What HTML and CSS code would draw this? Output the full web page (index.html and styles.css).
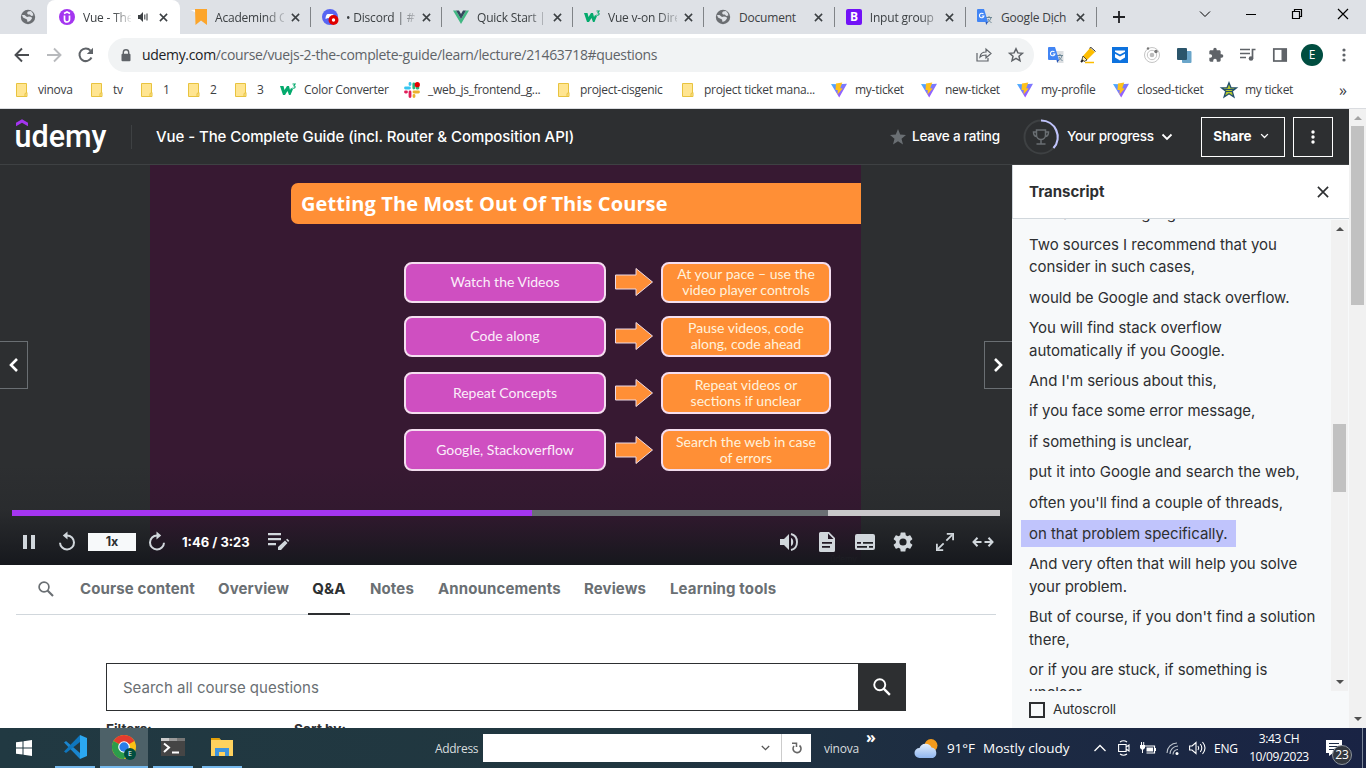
FILE: index.html
```html
<!DOCTYPE html>
<html lang="en">
<head>
<meta charset="utf-8">
<title>Vue - The Complete Guide</title>
<link rel="stylesheet" href="styles.css">
</head>
<body>
<svg class="defs" width="0" height="0">
  <defs>
    <linearGradient id="vg" x1="0" y1="0" x2="1" y2="1"><stop offset="0" stop-color="#41b6ff"/><stop offset="1" stop-color="#bd34fe"/></linearGradient>
    <linearGradient id="cg" x1="0" y1="0" x2="0" y2="1"><stop offset="0" stop-color="#e3eefc"/><stop offset="1" stop-color="#8fb6f0"/></linearGradient>
  </defs>
  <symbol id="globe" viewBox="0 0 16 16"><circle cx="8" cy="8" r="7.200" fill="#6b6e72"/><path d="M2 6l2.500 0 2.500 2 2-.5 2.500.5.500 1.500-2 2.500-2.500 1-.5-2.500L3 8.500zM8 2.500l3-.5 2 2.500.3 2-2 .5-1.500-1.500H8l-1-1.500z" fill="#dee1e6"/></symbol>
  <symbol id="x" viewBox="0 0 10 10"><path d="M1 1l8 8M9 1L1 9" stroke="currentColor" stroke-width="1.700" fill="none"/></symbol>
  <symbol id="w3" viewBox="0 0 16 16"><path d="M0 4h3.500l1 4L7 4h2l1 4 1-2 2 1-2.500 6H9L7.500 9 5 13H3z" fill="#04aa6d"/><path d="M12.500 2h2.600l-1.200 1.700c1.800.2 1.700 2.600-.3 2.600-.6 0-1-.2-1.200-.5" fill="none" stroke="#04aa6d" stroke-width="1.100"/></symbol>
  <symbol id="gt" viewBox="0 0 16 16"><path d="M7 4h8.500v12H10z" fill="#dcdfe2"/><path d="M9 8.500h6M12 7v1.500M14 8.500c-.5 2.500-2 4-3.500 5M11 10c1 2 2 3 3.500 3.500" stroke="#6d8796" stroke-width="1" fill="none"/><path d="M1 0h6l4 13H1a1 1 0 0 1-1-1V1a1 1 0 0 1 1-1z" fill="#4285f4"/><path d="M8.500 13h2.500l-1.800 3z" fill="#2857b8"/><path d="M6.500 5A2.300 2.300 0 1 0 7 7H4.800" fill="none" stroke="#fff" stroke-width="1.100"/></symbol>
  <symbol id="folder" viewBox="0 0 16 16"><path d="M2.500 1.500h10v13h-10z" fill="#ffe591" stroke="#e8c33f"/><path d="M11 14.500v-3l2-1v4z" fill="#ffe591" stroke="#e8c33f"/></symbol>
  <symbol id="vite" viewBox="0 0 16 16"><path d="M0 2l6 .2 10-.4L8.200 15.600z" fill="url(#vg)"/><path d="M11.300.4L5 1.400l-.5 6.600 2.300.1-.3 4.300 5.200-6-2.500-.2z" fill="#ffc21a"/></symbol>
  <symbol id="chev" viewBox="0 0 12 8"><path d="M1.500 1.500L6 6l4.500-4.500" fill="none" stroke="currentColor" stroke-width="1.800"/></symbol>
  <symbol id="lens" viewBox="0 0 16 16"><circle cx="6" cy="6" r="4.900" fill="none" stroke="currentColor" stroke-width="1.700"/><path d="M9.500 9.500l5.500 5.500" stroke="currentColor" stroke-width="2.100"/></symbol>
  <symbol id="arrow" viewBox="0 0 38 30"><path d="M.5 8h20.500V1.500L37.500 15 21 28.500V22H.5z" fill="#ff8f36" stroke="#ecd9e6" stroke-width="1"/></symbol>
  <symbol id="replay" viewBox="0 0 18 20"><path d="M9 4.500a7 7 0 1 1-7 7.200" fill="none" stroke="currentColor" stroke-width="2"/><path d="M9.500 .5v8L4.800 4.400z" fill="currentColor"/></symbol>
</svg>

<header class="browser">
  <div class="tabs">
    <div class="tab-pin"><svg class="i16"><use href="#globe"/></svg></div>
    <div class="tab active">
      <svg class="i16" viewBox="0 0 16 16"><circle cx="8" cy="8" r="8" fill="#a435f0"/><path d="M5 4.500L8 3l3 1.500M5.500 6.500v4a2.500 2.500 0 0 0 5 0v-4" fill="none" stroke="#fff" stroke-width="1.700"/></svg>
      <span class="t">Vue - The</span>
      <svg class="spk" viewBox="0 0 10 10"><path d="M0 3h2l3-3v10L2 7H0z" fill="#3c4043"/><path d="M6.800 2.500v5M9 1.500v7" stroke="#3c4043" stroke-width="1.100"/></svg>
      <svg class="x"><use href="#x"/></svg>
    </div>
    <div class="tab"><svg class="i16" viewBox="0 0 16 16"><path d="M0 1h5v3z" fill="#fff"/><path d="M4 0h12v16l-6-4.500L4.500 16z" fill="#fca52b"/></svg><span class="t">Academind C</span><svg class="x"><use href="#x"/></svg></div>
    <div class="tab"><svg class="i16" viewBox="0 0 16 16"><circle cx="8" cy="8" r="8" fill="#5865f2"/><path d="M3.500 10c0-3 1-5 2.500-5h4c1.500 0 2.500 2 2.500 4-2 1-5 .5-6.500 0z" fill="#fff"/><circle cx="11.500" cy="11" r="5" fill="#e00000"/><circle cx="11.500" cy="11" r="1.700" fill="#fff"/></svg><span class="t">• Discord | #v</span><svg class="x"><use href="#x"/></svg></div>
    <div class="tab"><svg class="i16" viewBox="0 0 16 16"><path d="M0 1.500h3L8 10l5-8.500h3L8 15z" fill="#41b883"/><path d="M3 1.500h3L8 5l2-3.500h3L8 10z" fill="#34495e"/></svg><span class="t">Quick Start |</span><svg class="x"><use href="#x"/></svg></div>
    <div class="tab"><svg class="i16"><use href="#w3"/></svg><span class="t">Vue v-on Dire</span><svg class="x"><use href="#x"/></svg></div>
    <div class="tab"><svg class="i16"><use href="#globe"/></svg><span class="t full">Document</span><svg class="x"><use href="#x"/></svg></div>
    <div class="tab"><span class="boot">B</span><span class="t">Input group</span><svg class="x"><use href="#x"/></svg></div>
    <div class="tab"><svg class="i16"><use href="#gt"/></svg><span class="t full">Google Dịch</span><svg class="x"><use href="#x"/></svg></div>
    <svg class="plus" viewBox="0 0 12 12"><path d="M6 0v12M0 6h12" stroke="#202124" stroke-width="1.800"/></svg>
    <div class="win">
      <svg width="12" height="8"><path d="M1 1.500l5 5 5-5" fill="none" stroke="#000" stroke-width="1"/></svg>
      <svg width="10" height="10"><path d="M0 5.500h10" stroke="#000"/></svg>
      <svg width="10" height="10"><path d="M.5 2.500h7v7h-7zM2.500 2.500v-2h7v7h-2" fill="none" stroke="#000" stroke-width="1.200"/></svg>
      <svg width="10" height="10"><path d="M0 0l10 10M10 0L0 10" stroke="#000" stroke-width="1.200"/></svg>
    </div>
  </div>
  <div class="toolbar">
    <svg class="nav" viewBox="0 0 16 16"><path d="M15 8H2M8 1.500L1.500 8 8 14.500" fill="none" stroke="#4a4d51" stroke-width="1.900"/></svg>
    <svg class="nav" viewBox="0 0 16 16"><path d="M1 8h13M8 1.500L14.500 8 8 14.500" fill="none" stroke="#b8babd" stroke-width="1.900"/></svg>
    <svg class="nav" viewBox="0 0 16 16"><path d="M13.500 10.500A6.300 6.300 0 1 1 12.500 3.600" fill="none" stroke="#5f6368" stroke-width="2"/><path d="M15 .8v6.200H8.800z" fill="#5f6368"/></svg>
    <div class="omni">
      <svg class="lock" viewBox="0 0 10 13"><path d="M2.300 5V3.500a2.700 2.700 0 0 1 5.400 0V5" fill="none" stroke="#5f6368" stroke-width="1.400"/><rect x=".5" y="4.700" width="9" height="7.600" rx="1" fill="#5f6368"/></svg>
      <span class="url"><b>udemy.com</b>/course/vuejs-2-the-complete-guide/learn/lecture/21463718#questions</span>
      <svg class="i16 share-i" viewBox="0 0 16 16"><path d="M1 6v8h11v-3M4 10c.5-4 3-5 6-5V2l5 4.500-5 4.500V8C7.500 8 5.500 8.500 4 10z" fill="none" stroke="#5f6368" stroke-width="1.200"/></svg>
      <svg class="i16" viewBox="0 0 16 16"><path d="M8 1.700l1.900 4.200 4.500.4-3.400 3 1 4.500-4-2.400-4 2.400 1-4.500-3.400-3 4.500-.4z" fill="none" stroke="#5f6368" stroke-width="1.500"/></svg>
    </div>
    <div class="ext">
      <svg class="i16"><use href="#gt"/></svg>
      <svg class="i16" viewBox="0 0 16 16"><path d="M3 9l7-8 5 4-8 8z" fill="#fdbd00"/><path d="M3 9l4 4-3 1.500-2-2z" stroke="#222" stroke-width=".8" fill="#fff0b0"/><path d="M9.500 1.200L11 .5l4.500 4" stroke="#222" fill="none"/><path d="M1 15l2-2" stroke="#222" stroke-width="2"/><path d="M5 15.500h9" stroke="#fdbd00" stroke-width="1.500"/></svg>
      <svg class="i16" viewBox="0 0 16 16"><path d="M0 0h16v16H0z" fill="#0d72de"/><path d="M3 3.500h10v7L8 13.500l-5-3z" fill="#fff"/><path d="M2.500 5.500L8 8.500l5.500-3" stroke="#0d72de" stroke-width="1.600" fill="none"/></svg>
      <svg class="i16" viewBox="0 0 16 16"><g fill="none" stroke="#c5c5c5"><circle cx="8" cy="8" r="7.500"/><circle cx="8" cy="8" r="4.700"/></g><circle cx="8" cy="8" r="2.300" fill="#bbb"/><circle cx="12" cy="4.500" r="1.700" fill="#777"/><circle cx="4" cy="1.500" r="1.200" fill="#777"/></svg>
      <svg class="i16" viewBox="0 0 16 16"><rect x="6" y="4" width="9.500" height="12" rx="1" fill="#6aa5c9"/><rect x="1" y="1" width="10" height="12" rx="1" fill="#2b556b"/></svg>
      <svg class="i16" viewBox="0 0 24 24"><path fill="#5f6368" d="M20.500 11H19V7c0-1.100-.9-2-2-2h-4V3.500a2.500 2.500 0 0 0-5 0V5H4c-1.100 0-2 .9-2 2v3.800h1.500a2.700 2.700 0 0 1 0 5.400H2V20c0 1.100.9 2 2 2h3.800v-1.500a2.700 2.700 0 0 1 5.400 0V22H17c1.100 0 2-.9 2-2v-4h1.500a2.500 2.500 0 0 0 0-5z"/></svg>
      <svg class="i16" viewBox="0 0 16 16"><path d="M0 2.500h10M0 6.500h10M0 10.500h6M15.500 2.500h-3v9" fill="none" stroke="#5f6368" stroke-width="1.700"/><circle cx="11" cy="11.500" r="2.300" fill="#5f6368"/></svg>
      <svg class="i16" viewBox="0 0 16 16"><rect x="1.800" y="2" width="12.400" height="12" fill="none" stroke="#5f6368" stroke-width="1.700"/><path d="M9.500 2h5v12h-5z" fill="#5f6368"/></svg>
      <span class="avatar">E</span>
      <svg class="kebab" viewBox="0 0 4 14"><g fill="#5f6368"><circle cx="2" cy="2" r="1.600"/><circle cx="2" cy="7" r="1.600"/><circle cx="2" cy="12" r="1.600"/></g></svg>
    </div>
  </div>
  <nav class="marks">
    <a><svg class="i16"><use href="#folder"/></svg>vinova</a>
    <a><svg class="i16"><use href="#folder"/></svg>tv</a>
    <a><svg class="i16"><use href="#folder"/></svg>1</a>
    <a><svg class="i16"><use href="#folder"/></svg>2</a>
    <a><svg class="i16"><use href="#folder"/></svg>3</a>
    <a><svg class="i16"><use href="#w3"/></svg>Color Converter</a>
    <a><svg class="i16" viewBox="0 0 16 16"><g stroke-width="2.800" stroke-linecap="round"><path d="M1.500 6h4M6 1.500v1" stroke="#36c5f0"/><path d="M9.800 2v4M13 6h1" stroke="#2eb67d"/><path d="M10 10h4.500M10 13.500v1" stroke="#ecb22e"/><path d="M6 10v4.500M1.500 10h1" stroke="#e01e5a"/></g><circle cx="13.300" cy="2.700" r="2.600" fill="#e80000"/></svg>_web_js_frontend_g...</a>
    <a><svg class="i16"><use href="#folder"/></svg>project-cisgenic</a>
    <a><svg class="i16"><use href="#folder"/></svg>project ticket mana...</a>
    <a><svg class="i16"><use href="#vite"/></svg>my-ticket</a>
    <a><svg class="i16"><use href="#vite"/></svg>new-ticket</a>
    <a><svg class="i16"><use href="#vite"/></svg>my-profile</a>
    <a><svg class="i16"><use href="#vite"/></svg>closed-ticket</a>
    <a><svg class="i16" viewBox="0 0 16 16"><path d="M8 .8l2 5h5.500l-4.300 3.500 1.700 5.700L8 11.700 3.100 15l1.700-5.700L.5 5.800H6z" fill="#b7c92b" stroke="#23506e" stroke-width="1.300"/><path d="M3 7.500h10M5 9.500h6" stroke="#23506e"/></svg>my ticket</a>
    <span class="more">»</span>
  </nav>
</header>

<div class="page">
  <div class="site">
    <div class="top">
      <svg class="logo" width="92" height="36" viewBox="0 0 92 36"><path d="M1 8.200L7 4.700l6 3.500V4.700L7 1.200 1 4.700z" fill="#a435f0"/><text x="-.5" y="29" textLength="92" lengthAdjust="spacingAndGlyphs">udemy</text></svg>
      <h1>Vue - The Complete Guide (incl. Router &amp; Composition API)</h1>
      <svg class="star" viewBox="0 0 16 16"><path d="M8 0l2.200 5.500 5.800.4-4.500 3.800L13 15.500l-5-3.200-5 3.200 1.500-5.800L0 5.900l5.800-.4z" fill="#6a6f73"/></svg>
      <span class="rate">Leave a rating</span>
      <svg class="ring" viewBox="0 0 36 36"><circle cx="18" cy="18" r="16.500" fill="none" stroke="#3e4143" stroke-width="2"/><path d="M18 1.500A16.500 16.500 0 0 1 30.500 29" fill="none" stroke="#c0c4fc" stroke-width="2.200"/><g fill="none" stroke="#6a6f73" stroke-width="1.500"><path d="M13.500 11h9v5a4.500 4.500 0 0 1-9 0zM13.500 13h-3c0 3 1 4.500 3.500 4.500M22.500 13h3c0 3-1 4.500-3.500 4.500M18 20.500v4M13.500 25h9"/></g></svg>
      <span class="prog">Your progress</span>
      <svg class="c1"><use href="#chev"/></svg>
      <button class="share">Share<svg class="c2"><use href="#chev"/></svg></button>
      <button class="dots"><svg width="4" height="14" viewBox="0 0 4 14" fill="#fff"><circle cx="2" cy="2" r="1.700"/><circle cx="2" cy="7" r="1.700"/><circle cx="2" cy="12" r="1.700"/></svg></button>
    </div>
    <div class="body">
      <main>
        <div class="video">
          <div class="slide">
            <h2>Getting The Most Out Of This Course</h2>
            <div class="flow">
              <span class="pk">Watch the Videos</span><svg><use href="#arrow"/></svg><span class="or">At your pace – use the<br>video player controls</span>
              <span class="pk">Code along</span><svg><use href="#arrow"/></svg><span class="or">Pause videos, code<br>along, code ahead</span>
              <span class="pk">Repeat Concepts</span><svg><use href="#arrow"/></svg><span class="or">Repeat videos or<br>sections if unclear</span>
              <span class="pk">Google, Stackoverflow</span><svg><use href="#arrow"/></svg><span class="or">Search the web in case<br>of errors</span>
            </div>
            <span class="wm">ûdemy</span>
          </div>
          <button class="prev"><svg width="10" height="16"><path d="M8 2L2 8l6 6" fill="none" stroke="#fff" stroke-width="2.600"/></svg></button>
          <button class="next"><svg width="10" height="16"><path d="M1 2l6 6-6 6" fill="none" stroke="#fff" stroke-width="2.600"/></svg></button>
          <div class="controls">
            <div class="bar"><i class="played"></i><i class="loaded"></i></div>
            <div class="ctl">
              <svg class="pause" width="12" height="14"><path d="M0 0h4v14H0zM8 0h4v14H8z" fill="#d1d7dc"/></svg>
              <svg class="rp"><use href="#replay"/></svg>
              <span class="speed">1x</span>
              <svg class="rp flip"><use href="#replay"/></svg>
              <span class="time">1:46 / 3:23</span>
              <svg class="note" width="22" height="18"><path d="M0 1.200h13M0 6.200h13M0 11.200h8" stroke="#d1d7dc" stroke-width="2.200"/><path d="M10 17v-3l7-6.500 2.500 2.500-6.500 7zM18 6.800l1.300-1 2 2-1.200 1.300z" fill="#d1d7dc"/></svg>
              <div class="right">
                <svg viewBox="0 0 20 20"><path d="M1 7h4l5-5v16l-5-5H1zM12 6v8c3-1 3-7 0-8z" fill="#d1d7dc"/><path d="M12 2c8 2 8 14 0 16" stroke="#d1d7dc" stroke-width="1.900" fill="none"/></svg>
                <svg viewBox="0 0 20 20"><path fill-rule="evenodd" d="M2 1.500q0-1.500 1.500-1.500H12l6 6v12.500q0 1.500-1.500 1.500h-13Q2 20 2 18.500zM11 1.500V7h5.500zM5 10v1.800h10V10zm0 4v1.800h8V14z" fill="#d1d7dc"/></svg>
                <svg viewBox="0 0 20 20"><path fill-rule="evenodd" d="M2 2h16q2 0 2 2v12q0 2-2 2H2q-2 0-2-2V4q0-2 2-2zM2 10v1.800h4V10zm6 0v1.800h10V10zM2 14v1.800h10V14zm12 0v1.800h4V14z" fill="#d1d7dc"/></svg>
                <svg viewBox="2 2 20 20"><path fill="#d1d7dc" d="M19.140 12.940c.04-.3.060-.61.060-.94s-.02-.64-.07-.94l2.030-1.580a.49.490 0 0 0 .12-.61l-1.920-3.320a.49.490 0 0 0-.59-.22l-2.390.96a7 7 0 0 0-1.620-.94l-.36-2.540a.48.480 0 0 0-.48-.41h-3.840a.47.470 0 0 0-.47.410l-.36 2.540c-.59.240-1.130.57-1.620.940l-2.390-.96a.47.470 0 0 0-.59.220L2.740 8.870a.47.470 0 0 0 .12.610l2.030 1.580a7 7 0 0 0 0 1.880l-2.030 1.580a.49.490 0 0 0-.12.610l1.920 3.320c.12.220.37.290.59.220l2.390-.96c.5.380 1.030.7 1.620.940l.36 2.540c.05.240.24.410.48.410h3.840c.24 0 .44-.17.470-.41l.36-2.540a7 7 0 0 0 1.620-.94l2.390.96c.22.080.47 0 .59-.22l1.920-3.320a.47.470 0 0 0-.12-.61zM12 15.600a3.600 3.600 0 1 1 0-7.200 3.600 3.600 0 0 1 0 7.200z"/></svg>
                <svg viewBox="0 0 20 20"><path d="M12 1h7v7M1 12v7h7" fill="none" stroke="#d1d7dc" stroke-width="2"/><path d="M11.500 8.500l6.500-6.500M2 18l6.500-6.500" stroke="#d1d7dc" stroke-width="2"/></svg>
                <svg viewBox="0 0 20 20"><path d="M0 10h8.500M11.500 10H20M4.500 5.800L.5 10l4 4.200M15.500 5.800l4 4.200-4 4.200" fill="none" stroke="#d1d7dc" stroke-width="2"/></svg>
              </div>
            </div>
          </div>
        </div>
        <nav class="sections">
          <svg class="lens"><use href="#lens"/></svg>
          <a class="s1">Course content</a><a class="s2">Overview</a><a class="on">Q&amp;A</a><a class="s4">Notes</a><a class="s5">Announcements</a><a class="s6">Reviews</a><a class="s7">Learning tools</a>
        </nav>
        <div class="qa">
          <div class="search"><span class="ph">Search all course questions</span><button><svg width="18" height="18"><use href="#lens"/></svg></button></div>
          <div class="filters"><b>Filters:</b><b>Sort by:</b></div>
        </div>
      </main>
      <aside>
        <div class="ahead"><h3>Transcript</h3><svg width="12" height="12" viewBox="0 0 13 13"><path d="M1 1l11 11M12 1L1 12" stroke="#2d2f31" stroke-width="1.800"/></svg></div>
        <div class="scroll">
          <div class="cues">
            <p class="first">or what to do when going</p>
            <p>Two sources I recommend that you<br>consider in such cases,</p>
            <p>would be Google and stack overflow.</p>
            <p>You will find stack overflow<br>automatically if you Google.</p>
            <p>And I'm serious about this,</p>
            <p class="tight">if you face some error message,</p>
            <p>if something is unclear,</p>
            <p class="wide">put it into Google and search the web,</p>
            <p>often you'll find a couple of threads,</p>
            <p class="hl"><span>on that problem specifically.</span></p>
            <p>And very often that will help you solve<br>your problem.</p>
            <p>But of course, if you don't find a solution<br>there,</p>
            <p>or if you are stuck, if something is<br>unclear</p>
          </div>
          <div class="sb inner"><i class="up"></i><i class="thumb"></i><i class="down"></i></div>
        </div>
        <div class="auto"><i></i><span>Autoscroll</span></div>
      </aside>
    </div>
  </div>
  <div class="sb outer"><i class="up dim"></i><i class="thumb"></i><i class="down"></i></div>
</div>

<footer class="task">
  <svg class="start" width="16" height="16"><path d="M0 2.300L6.500 1.400V7.500H0zM7.500 1.200L16 0v7.500H7.500zM0 8.500h6.500v6.100L0 13.700zM7.500 8.500H16V16l-8.500-1.200z" fill="#fff"/></svg>
  <div class="app a1"><svg width="24" height="24"><path d="M17 0l7 3v18l-7 3z" fill="#2ba8f2"/><path d="M1 7.500l2-1.500 14 12v6z" fill="#1a86cf"/><path d="M1 16.500L3 18 17 7V0z" fill="#0f76bd"/></svg></div>
  <div class="app a2"><svg width="24" height="24"><circle cx="12" cy="12" r="12" fill="#fbc116"/><path d="M12 12L1.600 6a12 12 0 0 1 20.800 0z" fill="#e33b2e"/><path d="M12 12L1.600 6A12 12 0 0 0 12 24l5-9z" fill="#2c9c4b"/><circle cx="12" cy="12" r="5.800" fill="#fff"/><circle cx="12" cy="12" r="4.700" fill="#2a7de9"/></svg><em>E</em></div>
  <div class="app a3"><svg width="24" height="18"><path d="M0 0h24v18H0z" fill="#454545"/><path d="M0 0h8v3H0z" fill="#ccc"/><path d="M8 0h8v3H8z" fill="#999"/><path d="M16 0h8v3h-8z" fill="#777"/><path d="M3 5.500l5 4-5 4.500M11 14.500h7" fill="none" stroke="#fff" stroke-width="2"/></svg></div>
  <div class="app a4"><svg width="22" height="18"><path d="M0 0h8l2 2h12v16H0z" fill="#ffd25e"/><path d="M0 0h8l1.500 2H0z" fill="#e3a008"/><path d="M4 18v-8h14v8h-4v-4H8v4z" fill="#3f94dd"/></svg></div>
  <span class="addr">Address</span>
  <div class="box"><svg width="9" height="6" viewBox="0 0 11 7"><path d="M1 1l4.500 4.500L10 1" fill="none" stroke="#555" stroke-width="1.600"/></svg><div class="re"><svg width="10" height="12"><path d="M2 4A4 4 0 1 0 7.500 3.500" fill="none" stroke="#666" stroke-width="1.600"/><path d="M0 1.200h4.500V5" fill="none" stroke="#666" stroke-width="1.500"/></svg></div></div>
  <span class="vin">vinova</span><span class="gg">»</span>
  <svg class="cloud" width="25" height="21"><circle cx="17" cy="7.500" r="6.500" fill="#f49b1c"/><path d="M5.500 20a5 5 0 0 1 0-10 6.500 6.500 0 0 1 12-.5A5.500 5.500 0 0 1 19 20z" fill="url(#cg)"/></svg>
  <span class="deg">91°F</span><span class="wx">Mostly cloudy</span>
  <div class="tray">
    <svg class="caret" width="12" height="8"><path d="M.5 7L6 1.500 11.500 7" fill="none" stroke="#fff" stroke-width="1.300"/></svg>
    <svg width="12" height="16"><path d="M.6 4.500h7.500v7H.6zM8 7l3-2v6L8 9M2 2q3.500-2.500 7 0M2 14q3.500 2.500 7 0" fill="none" stroke="#fff" stroke-width="1.100"/></svg>
    <svg width="16" height="13"><path d="M4.500 4h10v7h-8" fill="none" stroke="#fff" stroke-width="1.200"/><path d="M6.500 5.500H13v4H6.500zM15 6h1v3h-1zM0 3h5v3L3.500 7.500h-2L0 6z" fill="#fff"/><path d="M1.500 0v3M3.700 0v3M2.500 7v4" stroke="#fff"/></svg>
    <svg width="13" height="13"><path d="M1 11A10 10 0 0 1 11 1M4 12a8 8 0 0 1 8-8M7 12.500a5 5 0 0 1 5-5" fill="none" stroke="#bfc6cf" stroke-width="1.100"/><circle cx="11" cy="11.500" r="1.500" fill="#fff"/></svg>
    <svg width="17" height="14"><path d="M.6 5h2.500L7 1.500v11L3 9H.6zM9 5q1.500 2 0 4M11.300 3q3 4 0 8M13.500 1q5 6 0 12" fill="none" stroke="#fff" stroke-width="1.100"/></svg>
  </div>
  <span class="eng">ENG</span>
  <div class="clock"><span>3:43 CH</span><span>10/09/2023</span></div>
  <div class="notif"><svg width="16" height="16"><path d="M0 0h16v13H7l-4 3v-3H0z" fill="#fff"/><path d="M3 3.500h10M3 6.500h10M3 9.500h6" stroke="#1c2b45"/></svg><em>23</em></div>
</footer>
</body>
</html>
```
FILE: styles.css
```css
* { box-sizing: border-box; }
body { margin: 0; width: 1366px; height: 768px; overflow: hidden; display: flex; flex-direction: column; font-family: "Open Sans", "Noto Sans", sans-serif; font-size: 12px; color: #3c4043; background: #fff; }
h1, h2, h3, p { margin: 0; }
button { font: inherit; color: #fff; background: none; border: 1px solid #fff; padding: 0; display: flex; align-items: center; justify-content: center; }
svg { flex: none; display: block; overflow: visible; }
.defs { position: absolute; }
.i16 { width: 16px; height: 16px; }

.browser { flex: none; height: 109px; border-bottom: 1px solid #dadce0; }
.tabs { height: 34px; background: #dee1e6; display: flex; align-items: center; }
.tab-pin { width: 47px; height: 34px; padding: 9px 0 0 20px; }
.tab { width: 131px; height: 34px; display: flex; align-items: center; padding: 0 12px 0 11px; position: relative; font-size: 12px; letter-spacing: -.2px; }
.tab .t { width: 69px; margin: 0 7px 0 8px; white-space: nowrap; -webkit-mask-image: linear-gradient(90deg, #000 50px, transparent 74px); mask-image: linear-gradient(90deg, #000 50px, transparent 74px); }
.tab .t.full { -webkit-mask-image: none; mask-image: none; }
.tab .x { width: 9px; height: 9px; }
.tab:not(.active)::after { content: ""; position: absolute; right: 0; top: 7px; width: 1px; height: 20px; background: #808387; }
.tab.active + .tab::after { right: 0; }
.tab.active { width: 133px; background: #fff; border-radius: 8px 8px 0 0; padding-left: 12px; color: #3c4043; }
.tab.active .t { width: 48px; margin-right: 7px; -webkit-mask-image: linear-gradient(90deg, #000 30px, transparent 50px); mask-image: linear-gradient(90deg, #000 30px, transparent 50px); }
.spk { width: 10px; height: 10px; margin-right: 11px; }
.boot { width: 16px; height: 16px; border-radius: 2px; background: #7212f7; color: #fff; font-weight: 700; font-size: 12px; line-height: 16px; text-align: center; }
.plus { width: 12px; height: 12px; margin-left: 16px; }
.win { display: flex; align-items: center; gap: 36px; margin-left: 74px; padding-bottom: 6px; }
.win svg:nth-child(2) { margin-left: -1px; }

.toolbar { height: 42px; display: flex; align-items: center; padding-left: 14px; }
.nav { width: 16px; height: 16px; margin-right: 16px; }
.omni { width: 926px; height: 34px; margin-left: -2px; border-radius: 17px; background: #f1f3f4; display: flex; align-items: center; padding: 0 10px 0 13px; }
.lock { width: 10px; height: 13px; margin-right: 11px; }
.url { flex: 1; font-size: 14px; color: #5f6368; letter-spacing: -.33px; margin-top: -1px; }
.url b { font-weight: 400; color: #202124; }
.share-i { margin-right: 16px; }
.ext { display: flex; align-items: center; gap: 16px; margin-left: 14px; }
.avatar { width: 22px; height: 22px; margin-left: -3px; border-radius: 50%; background: #004d40; color: #fff; text-align: center; line-height: 22px; font-size: 12px; }
.kebab { width: 4px; height: 14px; margin-left: 3px; }

.marks { height: 32px; padding-left: 14px; display: grid; grid-template-columns: 75px 50px 47px 47px 46px 125px 152px 124px 151px 90px 96px 96px 108px 118px auto; align-items: center; padding-bottom: 5px; white-space: nowrap; }
.marks a { display: flex; align-items: center; gap: 8px; letter-spacing: -.28px; }
.marks a:nth-child(6) { padding-left: 1px; }
.more { font-size: 16px; line-height: 16px; }

.page { flex: none; height: 619px; display: flex; overflow: hidden; font-family: Inter, "Liberation Sans", sans-serif; color: #2d2f31; }
.site { width: 1349px; }
.top { height: 56px; background: #2d2f31; border-bottom: 1px solid #3e4143; display: flex; align-items: center; padding: 0 16px 0 15px; color: #fff; }
.logo { margin-top: -2px; }
.logo text { font-family: Roboto, sans-serif; font-weight: 500; font-size: 31px; fill: #fff; }
.top h1 { width: 742px; height: 24px; border-left: 1px solid #3e4143; margin-left: 24px; padding-left: 24px; font-size: 15px; line-height: 24px; font-weight: 500; letter-spacing: -.08px; white-space: nowrap; }
.star { width: 16px; height: 16px; margin-left: 17px; }
.rate { width: 88px; margin-left: 6px; padding-bottom: 1px; font-size: 13.500px; font-weight: 500; letter-spacing: -.2px; white-space: nowrap; }
.ring { width: 36px; height: 36px; margin-left: 23px; }
.prog { width: 86px; margin-left: 8px; padding-bottom: 1px; font-size: 13.500px; font-weight: 500; letter-spacing: -.3px; white-space: nowrap; }
.c1 { width: 12px; height: 8px; margin-left: 8px; }
.share { width: 84px; height: 40px; margin-left: 28px; font-size: 13.500px; font-weight: 700; gap: 8px; padding: 0 4px 1px 0; }
.c2 { width: 9px; height: 6px; }
.dots { width: 40px; height: 40px; margin-left: 8px; }

.body { display: flex; height: 563px; }
main { width: 1012px; }
.video { height: 400px; background: #2d2f31; position: relative; padding-left: 150px; }
.slide { width: 711px; height: 400px; background: #371932; padding-top: 18px; position: relative; font-family: Lato, sans-serif; color: #fbeefa; }
.slide h2 { height: 41px; margin-left: 141px; border-radius: 7px 0 0 7px; background: #ff8f36; padding-left: 10px; font: 700 20px/41px "Open Sans", sans-serif; letter-spacing: .1px; color: #fff; white-space: nowrap; }
.flow { margin: 37.500px 30px 0 254px; display: grid; grid-template-columns: 202px 39px 170px; column-gap: 8px; grid-template-rows: 54px 56.500px 57px 42px; }
.flow span { height: 41.500px; border: 2px solid #f5def0; border-radius: 8px; display: flex; align-items: center; justify-content: center; text-align: center; font-size: 14px; line-height: 16px; white-space: nowrap; }
.flow .pk { background: #cf4fc1; }
.flow .or { background: #ff8f36; color: #fff2dc; }
.flow svg { width: 38px; height: 30px; margin: 5.500px 0 0 .5px; }
.wm { position: absolute; right: 4px; bottom: 1px; font-size: 9px; color: #5e4a5c; }
.prev, .next { position: absolute; top: 176px; width: 28px; height: 48px; background: #2d2f31; border-color: #6a6f73; }
.prev { left: 0; border-left: 0; }
.next { right: 0; border-right: 0; }
.controls { position: absolute; left: 0; right: 0; bottom: 0; height: 100px; padding: 45px 12px 0; background: linear-gradient(rgba(22,24,29,0), rgba(22,24,29,.15) 45%, rgba(22,24,29,.6) 75%, rgba(22,24,29,1)); }
.bar { height: 6px; background: #c9c8ca; display: flex; }
.played { width: 520px; background: #a435f0; }
.loaded { width: 296px; background: #6a6f73; }
.ctl { height: 52px; display: flex; align-items: center; padding: 0 7px 0 11px; }
.rp { width: 18px; height: 20px; color: #d1d7dc; margin: -2px 0 0 23px; }
.speed { width: 48px; height: 18px; margin-left: 12px; background: #f7f9fa; color: #2d2f31; font-size: 12.500px; font-weight: 700; line-height: 18px; text-align: center; }
.flip { margin-left: 12px; transform: scaleX(-1); }
.time { width: 70px; margin-left: 16px; color: #fff; font-size: 13px; font-weight: 700; white-space: nowrap; }
.note { margin-left: 16px; }
.right { margin-left: auto; display: flex; gap: 18px; }
.right svg { width: 20px; height: 20px; }
.right svg:nth-child(5) { width: 18px; height: 18px; margin: 1px 1px 0 5px; }

.sections { height: 50px; margin: 0 16px; border-bottom: 1px solid #d1d7dc; display: flex; align-items: flex-start; padding-left: 22px; font-size: 15px; font-weight: 700; letter-spacing: .12px; color: #6a6f73; line-height: 48px; white-space: nowrap; }
.lens { width: 16px; height: 16px; margin: 16px 26px 0 0; }
.sections a { margin-right: 24px; height: 50px; }
.sections .s1 { width: 114px; }
.sections .s2 { width: 70px; }
.sections .on { width: 42px; text-align: center; margin: 0 20px 0 -4px; color: #2d2f31; border-bottom: 2px solid #2d2f31; }
.sections .s4 { width: 44px; }
.sections .s5 { width: 122px; }
.sections .s6 { width: 62px; }
.qa { padding: 48px 106px 0; }
.search { height: 48px; border: 1px solid #2d2f31; display: flex; align-items: center; justify-content: space-between; padding-left: 16px; font-size: 15px; color: #6a6f73; }
.search button { width: 47px; height: 46px; background: #2d2f31; border: 0; }
.filters { display: flex; padding-top: 9px; font-size: 13.500px; line-height: 18px; }
.filters b { width: 188px; }

aside { width: 337px; background: #f7f9fa; display: flex; flex-direction: column; }
.ahead { height: 54px; background: #fff; border: solid #d1d7dc; border-width: 0 0 1px 1px; display: flex; align-items: center; justify-content: space-between; padding: 0 20px 0 16px; }
.ahead h3 { font-size: 15px; font-weight: 700; }
.scroll { height: 472px; display: flex; overflow: hidden; }
.cues { width: 319px; padding-left: 17px; margin-top: -19.400px; font-size: 15px; line-height: 22.400px; letter-spacing: -.04px; white-space: nowrap; }
.cues p { padding: 4px 0; }
.cues .tight { letter-spacing: -.1px; }
.cues .wide { letter-spacing: .03px; }
.cues .first { margin-top: -1px; padding-bottom: 5px; letter-spacing: -1.250px; word-spacing: -1px; }
.cues .hl { padding: 5px 0 4px; }
.hl span { background: #c0c4fc; padding: 4px 8px; margin-left: -8px; }
.sb { background: #f1f1f1; display: flex; flex-direction: column; align-items: center; width: 17px; }
.inner { margin-top: 1px; }
.up, .down { border: solid transparent; border-width: 0 4px 4px; border-bottom-color: #505050; margin-top: 7px; }
.up.dim { border-bottom-color: #a3a3a3; }
.down { border-width: 4px 4px 0; border-top-color: #505050; margin: auto 0 7px; }
.thumb { width: 13px; background: #c1c1c1; }
.inner .thumb { height: 68px; margin-top: 193px; }
.outer .thumb { height: 179px; margin-top: 6px; }
.auto { height: 37px; display: flex; align-items: center; padding-left: 17px; font-size: 13.500px; letter-spacing: -.1px; }
.auto i { width: 16px; height: 16px; border: 2px solid #2d2f31; margin-right: 8px; }
.auto span { padding-bottom: 1px; }

.task { flex: none; height: 40px; background: linear-gradient(90deg, #213942, #20363f 45%, #1d2c42 70%, #192344); display: flex; align-items: center; color: #fff; white-space: nowrap; position: relative; padding-left: 16px; }
.task em { font-style: normal; position: absolute; border-radius: 50%; text-align: center; }
.app { height: 40px; width: 40px; border-bottom: 2px solid #76b9ed; display: flex; align-items: center; justify-content: center; position: relative; }
.a1 { margin-left: 23px; }
.a2 { width: 48px; margin-left: 5px; background: #4d6168; }
.a2 em { right: 12px; bottom: 6px; width: 12px; height: 12px; background: #004d40; font-size: 7px; line-height: 12px; }
.a3 { margin-left: 5px; }
.a4 { margin-left: 9px; }
.addr { margin-left: 193px; width: 48px; color: #d8dddf; letter-spacing: -.3px; }
.box { width: 328px; height: 28px; background: #fff; display: flex; justify-content: flex-end; align-items: center; }
.re { width: 30px; height: 28px; margin-left: 11px; border-left: 1px solid #ccc; display: flex; align-items: center; justify-content: center; }
.vin { margin-left: 13px; width: 42px; color: #d8dddf; letter-spacing: -.2px; }
.gg { width: 10px; font-size: 16px; line-height: 16px; font-weight: 700; margin-top: -22px; }
.cloud { margin-left: 38px; }
.deg { margin-left: 8px; width: 36px; font-size: 13.500px; letter-spacing: -.1px; }
.wx { width: 87px; font-size: 13.500px; }
.tray { display: flex; align-items: center; gap: 10px; margin-left: 24px; }
.caret { margin-right: 2px; }
.eng { margin-left: 8px; width: 24px; letter-spacing: -.2px; }
.clock { width: 70px; margin-left: 6px; display: flex; flex-direction: column; align-items: center; line-height: 18px; letter-spacing: -.4px; }
.notif { position: relative; margin-left: 12px; width: 37px; height: 40px; padding-top: 12px; border-right: 1px solid #7b8698; }
.notif em { right: 10px; top: 17px; width: 20px; height: 20px; line-height: 18px; font-size: 12px; background: #33383f; border: 1px solid #8d949c; }
```
